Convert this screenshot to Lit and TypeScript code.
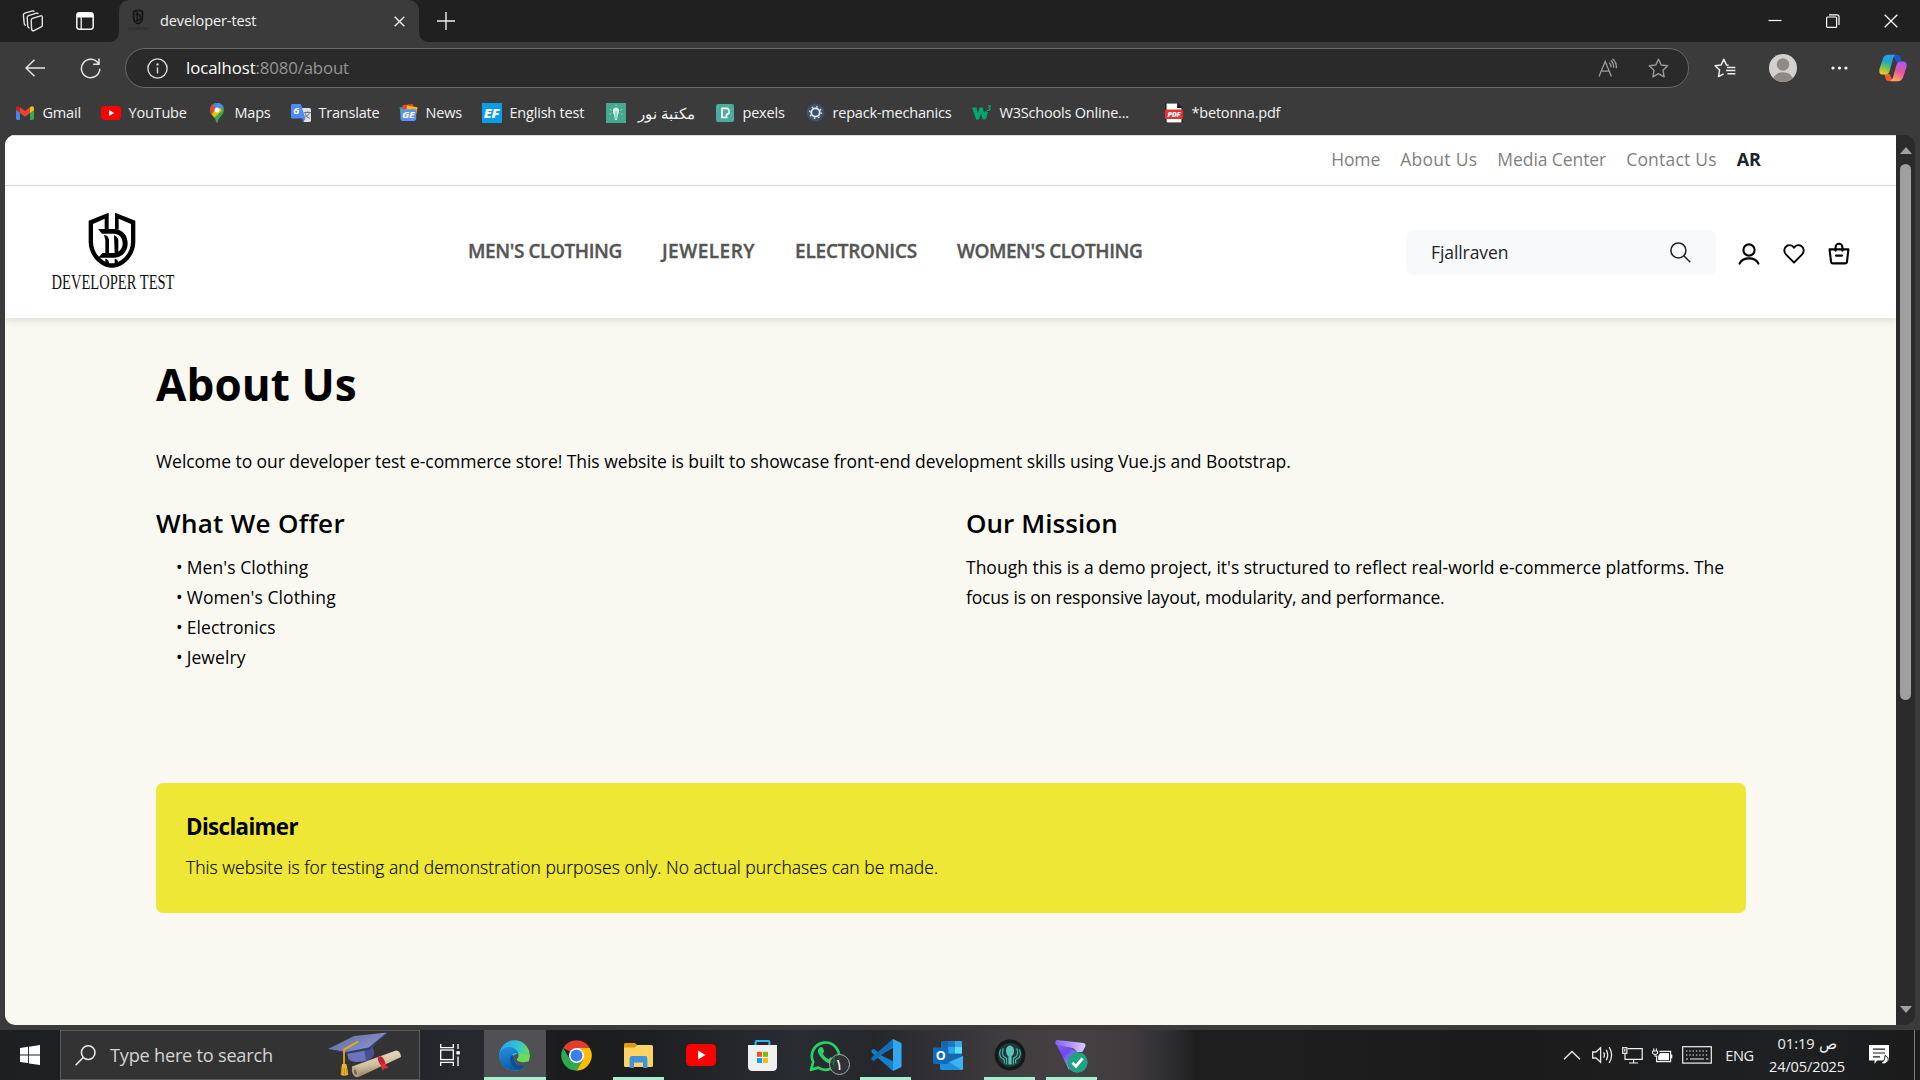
import { LitElement, html, css } from "lit";
import { customElement } from "lit/decorators.js";
import { classMap } from "lit/directives/class-map.js";

/* ---------- icons: browser chrome ---------- */
const workspacesIcon = html`<svg width="22" height="22" viewBox="0 0 22 22" fill="none" stroke="#e4e4e4" stroke-width="1.4" stroke-linejoin="round"><path d="M10.4 8.3 18.6 5.9Q20.3 5.5 20.3 7.2V15.2Q20.3 16.4 19.2 16.9L12 20.6Q9.9 21.4 9.6 19.2L9.2 10.2Q9.2 8.7 10.4 8.3Z"/><path d="M7.6 18Q5.9 18 5.7 16.2L5.2 7.4Q5.2 6 6.5 5.6L14.4 3.2Q15.8 2.9 16.2 4"/><path d="M3.9 15.4Q2.4 15.2 2.2 13.4L1.4 4.9Q1.4 3.5 2.7 3.1L10.6.9Q11.8.7 12.3 1.6"/></svg>`;
const tabsIcon = html`<svg width="18" height="18" viewBox="0 0 18 18"><rect x=".8" y=".8" width="16.4" height="16.4" rx="2.6" fill="none" stroke="#f4f4f4" stroke-width="1.5"/><path d="M1 5.6V3.4Q1 1 3.4 1H14.6Q17 1 17 3.4V5.6Z" fill="#fff"/><path d="M5.2 5V17" stroke="#f4f4f4" stroke-width="1.3"/></svg>`;
const closeIcon = html`<svg width="11" height="11" viewBox="0 0 11 11" stroke="#eee" stroke-width="1.4"><path d="M.7.7 10.3 10.3M10.3.7.7 10.3"/></svg>`;
const plusIcon = html`<svg width="18" height="18" viewBox="0 0 18 18" stroke="#eee" stroke-width="1.4"><path d="M9 0V18M0 9H18"/></svg>`;
const backIcon = html`<svg width="20" height="18" viewBox="0 0 20 18" fill="none" stroke="#e6e6e6" stroke-width="1.4"><path d="M9.5.7 1 9 9.5 17.3M1 9H20"/></svg>`;
const reloadIcon = html`<svg width="21" height="21" viewBox="0 0 21 21" fill="none" stroke="#e6e6e6" stroke-width="1.5"><path d="M18.4 5.6A9.2 9.2 0 1 0 19.8 10.8M19 .6V6.2H13.2"/></svg>`;
const infoIcon = html`<svg width="21" height="21" viewBox="0 0 21 21" fill="none" stroke="#dcdcdc" stroke-width="1.4"><circle cx="10.5" cy="10.5" r="9.6"/><path d="M10.5 9.3V15.4"/><circle cx="10.5" cy="6.4" r=".5" fill="#dcdcdc"/></svg>`;
const readAloudIcon = html`<svg width="20" height="20" viewBox="0 0 20 20" fill="none" stroke="#9b9b9b" stroke-width="1.3"><path d="M1 18.6 7.2 3.4 13.4 18.6M3.2 13.2H11.2M11.2 4.6Q13.2 6.6 13 9.4M12.8 2.6Q16 5.4 15.6 9.8M14.4.8Q18.8 4.4 18.4 10.2"/></svg>`;
const starIcon = html`<svg width="21" height="20" viewBox="0 0 21 20" fill="none" stroke="#9b9b9b" stroke-width="1.4" stroke-linejoin="round"><path d="M10.5 1.2 13.2 7 19.7 7.8 15 12.3 16.1 18.8 10.5 15.7 4.9 18.8 6 12.3 1.3 7.8 7.8 7Z"/></svg>`;
const collectionsIcon = html`<svg width="22" height="20" viewBox="0 0 22 20" fill="none" stroke="#ececec" stroke-width="1.5" stroke-linejoin="round"><path d="M14.6 7.2 12.4 6.9 9.8 1.2 7.2 6.9 1.1 7.7 5.6 12 4.5 18.6 9.6 15.8M13 9.4H21.4M12 12.6H21.4M13.4 15.8H21.4"/></svg>`;
const avatarIcon = html`<svg width="28" height="28" viewBox="0 0 28 28"><clipPath id="av"><circle cx="14" cy="14" r="14"/></clipPath><g clip-path="url(#av)"><rect width="28" height="28" fill="#d3d1cf"/><circle cx="14" cy="10.5" r="6.2" fill="#8f8a86"/><ellipse cx="14" cy="25.8" rx="10" ry="7.6" fill="#8f8a86"/></g></svg>`;
const dotsIcon = html`<svg width="17" height="4" viewBox="0 0 17 4" fill="#fff"><circle cx="2" cy="2" r="1.6"/><circle cx="8.5" cy="2" r="1.6"/><circle cx="15" cy="2" r="1.6"/></svg>`;
const copilotIcon = html`<svg width="28" height="28" viewBox="0 0 28 28"><defs>
<linearGradient id="cp1" x1=".6" y1="0" x2=".3" y2="1"><stop offset="0" stop-color="#2a9df0"/><stop offset=".35" stop-color="#19a7c9"/><stop offset=".65" stop-color="#6fc05a"/><stop offset="1" stop-color="#f6c915"/></linearGradient>
<linearGradient id="cp2" x1=".7" y1="0" x2=".3" y2="1"><stop offset="0" stop-color="#a55bf0"/><stop offset=".5" stop-color="#e8569c"/><stop offset="1" stop-color="#fbae5c"/></linearGradient></defs>
<path d="M14 1H18.5Q20.8 1 21.6 3.6L22.6 8H17.4Z" fill="#1c54d8"/><path d="M14 27H9.6Q7.3 27 6.5 24.4L5.4 20H10.6Z" fill="#ee5a32"/>
<path d="M9.6.8H17Q14.8 1.6 14 4.6L10.6 17Q9.6 20.6 6.6 20.6H4Q-.8 20.4.6 14.6L3.8 5Q5.2.8 9.6.8Z" fill="url(#cp1)"/>
<path d="M18.4 27.2H11Q13.2 26.4 14 23.4L17.4 11Q18.4 7.4 21.4 7.4H24Q28.8 7.6 27.4 13.4L24.2 23Q22.8 27.2 18.4 27.2Z" fill="url(#cp2)"/></svg>`;
const minIcon = html`<svg width="14" height="14" viewBox="0 0 14 14"><path d="M.5 6.5H13.5" stroke="#fff" stroke-width="1.2"/></svg>`;
const restoreIcon = html`<svg width="14" height="14" viewBox="0 0 14 14" fill="none" stroke="#fff" stroke-width="1.2"><rect x=".6" y="3" width="10" height="10.4" rx="1"/><path d="M3 .9H11Q13 .9 13 2.9V11"/></svg>`;
const exitIcon = html`<svg width="14" height="14" viewBox="0 0 14 14" stroke="#fff" stroke-width="1.3"><path d="M.7.7 13.3 13.3M13.3.7.7 13.3"/></svg>`;

/* ---------- icons: bookmarks ---------- */
const gmailIcon = html`<svg width="18" height="14" viewBox="0 0 18 14"><path d="M0 2V12.6Q0 14 1.4 14H4V5Z" fill="#4285f4"/><path d="M18 2V12.6Q18 14 16.6 14H14V5Z" fill="#34a853"/><path d="M14 1.2 15.2.4Q18-.6 18 2.4V4L14 7Z" fill="#fbbc04"/><path d="M4 1.2 2.8.4Q0-.6 0 2.4V4L4 7Z" fill="#c5221f"/><path d="M4 1.2 9 5 14 1.2V7L9 10.8 4 7Z" fill="#ea4335"/></svg>`;
const ytIcon = html`<svg width="20" height="14" viewBox="0 0 20 14"><rect width="20" height="14" rx="3.4" fill="#f00"/><path d="M8 4 13.2 7 8 10Z" fill="#fff"/></svg>`;
const mapsIcon = html`<svg width="14" height="20" viewBox="0 0 14 20"><clipPath id="mp"><path d="M7 0A6.8 6.8 0 0 1 14 7C14 12 8.6 13.6 7.8 19Q7 21 6.2 19C5.4 13.6 0 12 0 7A6.8 6.8 0 0 1 7 0Z"/></clipPath><g clip-path="url(#mp)"><rect width="14" height="20" fill="#34a853"/><path d="M0 0H14V3L7 9.4 0 3Z" fill="#4285f4"/><path d="M0 3 3.4 1.6 6 5 1 11-1 8Z" fill="#ea4335"/><path d="M1.4 11.6 9.4 2.4 11.8 7.8 4.4 14.6Z" fill="#fbbc04"/><path d="M8 0 14 0 14 5 10.8 4 7.6 7.4 5 5Z" fill="#4a8af4"/></g><circle cx="7" cy="7" r="2.5" fill="#fff"/></svg>`;
const translateIcon = html`<svg width="20" height="20" viewBox="0 0 20 20"><path d="M8 5H18.4Q20 5 20 6.6V17.6Q20 19 18.6 19H12.4Z" fill="#dfe1e5"/><text x="10.8" y="15.4" font-size="8.6" fill="#5f6368" font-family="Noto Sans CJK SC, sans-serif">文</text><path d="M1.4 1H9.8L14.4 15.6H1.4Q0 15.6 0 14.2V2.4Q0 1 1.4 1Z" fill="#4c8bf5"/><path d="M10.8 15.6H14.4L12.2 19Z" fill="#3367d6"/><text x="2.2" y="11" font-size="9" font-weight="700" fill="#fff" font-family="Open Sans, sans-serif">G</text></svg>`;
const newsIcon = html`<svg width="19" height="17" viewBox="0 0 19 17"><path d="M.4 3.4 11 .6 13 8 2 11Z" fill="#34a853"/><path d="M3.6 1 14 0 14.6 8H4Z" fill="#ea4335"/><path d="M8 1.4 18.6 3.2 17 11 7 9Z" fill="#fbbc04"/><path d="M1.4 5.2H17.2V14.6Q17.2 17 15 17H3.6Q1.4 17 1.4 14.6Z" fill="#5b93f5"/><text x="3" y="14.2" font-size="8.4" font-weight="700" fill="#fff" font-family="Open Sans, sans-serif" textLength="12.4" lengthAdjust="spacingAndGlyphs">GE</text></svg>`;
const efIcon = html`<svg width="20" height="20" viewBox="0 0 20 20"><rect width="20" height="20" fill="#0a9ced"/><text x="1.8" y="14.6" font-size="12.5" font-weight="800" font-style="italic" fill="#fff" font-family="Open Sans, sans-serif" textLength="15.6" lengthAdjust="spacingAndGlyphs">EF</text></svg>`;
const noorIcon = html`<svg width="20" height="20" viewBox="0 0 20 20"><rect width="20" height="20" fill="#44ab93"/><path d="M4 6 5.6 7.4M16 6 14.4 7.4M10 1.6V3.2M3.4 11H5M15 11H16.6" stroke="#c7d36b" stroke-width="1"/><path d="M10 4.4C13.4 4.4 14 8.6 12 11.4L10.9 17H9.1L8 11.4C6 8.6 6.6 4.4 10 4.4Z" fill="#d6f3ea"/><path d="M10 8V16" stroke="#44ab93" stroke-width=".8"/></svg>`;
const pexelsIcon = html`<svg width="18" height="18" viewBox="0 0 18 18"><rect width="18" height="18" rx="2" fill="#4bab9c"/><path d="M6 4.4H9.8A3 3 0 0 1 10.6 10.4V13.4H6Z" fill="none" stroke="#fff" stroke-width="1.6"/></svg>`;
const repackIcon = html`<svg width="19" height="19" viewBox="0 0 19 19"><circle cx="9.5" cy="9.5" r="9" fill="#40506f"/><circle cx="9.5" cy="9.5" r="4.2" fill="none" stroke="#e6e9ef" stroke-width="1.8"/><circle cx="9.5" cy="9.5" r="5.8" fill="none" stroke="#e6e9ef" stroke-width="1.4" stroke-dasharray="1.6 2.95"/></svg>`;
const w3Icon = html`<svg width="20" height="18" viewBox="0 0 20 18"><path d="M0 3.6H4.4L6 9.6 7.6 3.6H10.6L12.2 9.6 13 6.8 16 8.6 13.6 15.4H10.8L9 9.4 7 15.4H4.2Z" fill="#04aa6d"/><text x="14.8" y="7.4" font-size="8" font-weight="700" fill="#04aa6d" font-family="Open Sans, sans-serif">3</text></svg>`;
const pdfIcon = html`<svg width="18" height="20" viewBox="0 0 18 20"><path d="M1 0H12.4L17 4.8V20H1Z" fill="#fff" stroke="#111" stroke-width="1"/><path d="M12.2 0V5H17Z" fill="#111"/><rect y="6.6" width="18" height="9.4" rx="1" fill="#e5322d"/><text x="2.4" y="13.8" font-size="6.6" font-weight="800" fill="#fff" font-family="Open Sans, sans-serif" textLength="13.2" lengthAdjust="spacingAndGlyphs">PDF</text></svg>`;

/* ---------- icons: store page ---------- */
const brandLogo = html`<svg class="brand" width="124" height="82" viewBox="0 0 124 82"><g transform="translate(37 0) scale(.3333) translate(-24 -20)"><path d="M86 22 26 46V110C26 150 60 187 96 187S166 150 166 110V46L105 22V72H116V40L153 56V110C153 143 124 174 96 174S39 143 39 110V56L74 40V72H86Z"/><path d="M54 71H106C130 74 143 92 143 114S130 154 105 157H54L68 143H104C120 140 128 128 128 114S120 87 104 85H66Z"/><path d="M72 90H78Q86 94 87 104V143H76V104ZM102 90Q113 94 115 104V143H104ZM76 160Q86 162 87 172V180L76 178ZM104 160Q114 162 115 172V177L104 180Z"/></g><text x=".5" y="77" font-size="21.6" font-family="Liberation Serif, serif" fill="#111" textLength="123" lengthAdjust="spacingAndGlyphs">DEVELOPER TEST</text></svg>`;
const favicon = html`<svg width="22" height="26" viewBox="0 0 22 26"><path d="M10.4 2 6.6 3.6V9.6C6.6 12.8 8.6 15.6 11 15.6S15.4 12.8 15.4 9.6V3.6L11.6 2" fill="none" stroke="#151515" stroke-width="1.7"/><path d="M8.6 6.4H11.2Q13.4 6.8 13.4 9.4T11.2 12.4H8.6M10.3 3V14" fill="none" stroke="#151515" stroke-width="1.4"/><text x="1" y="22.4" font-size="5" font-family="Liberation Serif, serif" fill="#1b1b1b" textLength="20" lengthAdjust="spacingAndGlyphs">DEVELOPER TEST</text></svg>`;
const searchIcon = html`<svg width="21" height="21" viewBox="0 0 21 21" fill="none" stroke="#222" stroke-width="1.5"><circle cx="8.4" cy="8.4" r="7.5"/><path d="M13.8 13.8 20.3 20.3"/></svg>`;
const userIcon = html`<svg width="24" height="24" viewBox="0 0 24 24" fill="none" stroke="#000" stroke-width="2.1" stroke-linecap="round"><circle cx="12" cy="8" r="5.6"/><path d="M2.6 21.6C4.2 18 7.2 16.4 12 16.4S19.8 18 21.4 21.6"/></svg>`;
const heartIcon = html`<svg width="24" height="24" viewBox="0 0 24 24" fill="none" stroke="#000" stroke-width="1.9" stroke-linejoin="round"><path d="M12 20.6 3.9 12.4C1.4 9.6 2 5.6 4.9 3.9 7.4 2.5 10.4 3.2 12 5.8 13.6 3.2 16.6 2.5 19.1 3.9 22 5.6 22.6 9.6 20.1 12.4Z"/></svg>`;
const bagIcon = html`<svg width="24" height="24" viewBox="0 0 24 24" fill="none" stroke="#000" stroke-width="2.1" stroke-linecap="round" stroke-linejoin="round"><path d="M2.6 7.4H21.4L20 19.6Q19.8 21.4 18 21.4H6Q4.2 21.4 4 19.6ZM8.6 8.8V5.2A3.4 3.4 0 0 1 15.4 5.2V8.8M9 13.6H15"/></svg>`;

/* ---------- icons: taskbar ---------- */
const windowsIcon = html`<svg width="20" height="20" viewBox="0 0 20 20" fill="#fff"><path d="M0 2.9 8.1 1.8V9.5H0ZM9 1.7 20 0V9.5H9ZM0 10.4H8.1V18.1L0 17ZM9 10.4H20V20L9 18.4Z"/></svg>`;
const magnifierIcon = html`<svg width="21" height="21" viewBox="0 0 21 21" fill="none" stroke="#f0f0f0" stroke-width="1.5"><circle cx="13.2" cy="7.6" r="6.8"/><path d="M8.2 12.4.6 20.2"/></svg>`;
const gradIcon = html`<svg width="74" height="46" viewBox="0 0 74 46"><defs><linearGradient id="gc" x1="0" y1="0" x2="1" y2=".6"><stop offset="0" stop-color="#5b6699"/><stop offset="1" stop-color="#8b95c9"/></linearGradient><linearGradient id="gs" x1="0" y1="0" x2=".25" y2="1"><stop offset="0" stop-color="#f2ead6"/><stop offset=".6" stop-color="#cdbf9f"/><stop offset="1" stop-color="#8c7c5e"/></linearGradient></defs>
<path d="M18 16 44 12 46 22Q44 28 34 29.6 24 31 20.4 27Z" fill="#6c73bb"/><path d="M36 16 44 12 46 22Q44 27 38 28.8Z" fill="#4a4f93"/>
<path d="M0 17 26 4 59 .4 41 15.6 18 20Z" fill="url(#gc)"/><path d="M0 17 18 20 41 15.6 59 .4 59 2.4 41 18 18 22Z" fill="#353d6b"/>
<path d="M30 9.6 16 17.6V34" fill="none" stroke="#e5a91e" stroke-width="1.8"/><path d="M14 32H18.4L20.4 42.6Q16 45 12.6 42.6Z" fill="#efb32a"/><path d="M14 36 13.6 42M16.4 36V43M18.6 36 19 42" stroke="#a8740e" stroke-width=".6"/>
<path d="M24 34.6 68 18.4Q72.6 18.4 73 25L29.6 45.4Q24.4 44 24 34.6Z" fill="url(#gs)"/><ellipse cx="27.2" cy="40" rx="3" ry="5.2" transform="rotate(-22 27.2 40)" fill="#b5a684"/><ellipse cx="27.4" cy="40.2" rx="1.3" ry="2.8" transform="rotate(-22 27.4 40.2)" fill="#7a6a4c"/>
<path d="M49.6 25.4 53 24.2Q57 27 57.6 32.4L54 34Q50 31 49.6 25.4Z" fill="#c5202c"/><path d="M53 31Q58 32 60.6 36L56.4 36.6 55 38.6Q52 34 53 31Z" fill="#e0303a"/></svg>`;
const taskViewIcon = html`<svg width="20" height="22" viewBox="0 0 20 22" fill="none" stroke="#fff" stroke-width="1.3"><path d="M.7 0V3.6H13.3V0M.7 22V18.4H13.3V22"/><rect x=".7" y="6" width="12.6" height="9.6"/><path d="M18 0V5M18 12.6V22"/><path d="M16.4 8.8H19.8" stroke-width="3.2"/></svg>`;
const edgeIcon = html`<svg width="31" height="31" viewBox="0 0 31 31"><defs><linearGradient id="eg1" x1="0" y1=".3" x2="1" y2=".5"><stop offset="0" stop-color="#2aa8e8"/><stop offset=".55" stop-color="#2fc3d8"/><stop offset="1" stop-color="#6bdc4a"/></linearGradient><linearGradient id="eg2" x1=".2" y1="0" x2=".5" y2="1"><stop offset="0" stop-color="#1f8fe0"/><stop offset="1" stop-color="#0c59a4"/></linearGradient></defs>
<circle cx="15.5" cy="15.5" r="15.2" fill="url(#eg1)"/><path d="M.3 15C1 9.6 6 6.6 11 7.2 16.6 7.8 19.6 11.4 20 15 18.6 12.6 15 12.2 13 14.6 9.4 19.6 14.6 26.4 26.4 25.4 23.6 29 19.6 30.8 15.6 30.8 7 30.8-.2 23.6.3 15Z" fill="url(#eg2)"/><path d="M13 14.6C9 19 12 29.6 21.4 29.6 24 28.4 26 26.8 27.8 24.2 19.6 27.6 12.6 21.6 16 17.8Z" fill="#0b4f94"/><path d="M18.6 18.6C20.6 17.4 20.6 14.4 19.4 12.6L30.8 15.2C31 20 27 22 24 22 21 22 17.4 20.8 18.6 18.6Z" fill="#6adb5c"/><path d="M18 13.4C20.2 14.8 19.6 17.6 18.2 18.6 16.8 20 19.6 22.8 25 22.2 29.4 21.8 31 21.6 31 21.6L28.6 25.6C19.6 28 12.4 21.4 14.6 15.6Z" fill="#515154"/></svg>`;
const chromeIcon = html`<svg width="31" height="31" viewBox="0 0 31 31"><path d="M15.5 15.5 2.3 7.9A15.2 15.2 0 0 1 28.7 7.9H15.5Z" fill="#e33b2e"/><path d="M2.3 7.9A15.2 15.2 0 0 0 15.5 30.7L22.1 19.3 9 19.3Z" fill="#2da94f"/><path d="M28.7 7.9A15.2 15.2 0 0 1 15.5 30.7L22.1 19.3 15.5 7.9Z" fill="#fdbd00"/><circle cx="15.5" cy="15.5" r="7.6" fill="#fff"/><circle cx="15.5" cy="15.5" r="6" fill="#3a7ff0"/></svg>`;
const explorerIcon = html`<svg width="29" height="25" viewBox="0 0 29 25"><path d="M0 1.4Q0 0 1.4 0H11L13.6 2.4 11 5H0Z" fill="#dc9b10"/><path d="M0 4.4H10.8L13.4 2H27.4Q29 2 29 3.6V22.4Q29 24 27.4 24H1.6Q0 24 0 22.4Z" fill="#fdd365"/><path d="M5.6 25V15.4Q5.6 13 8 13H21Q23.4 13 23.4 15.4V25H19V19.4H10V25Z" fill="#3f93dd"/></svg>`;
const youtubeTile = html`<svg width="30" height="22" viewBox="0 0 30 22"><rect width="30" height="22" rx="4.6" fill="#f00"/><path d="M12 6.6 19.6 11 12 15.4Z" fill="#fff"/></svg>`;
const storeIcon = html`<svg width="29" height="31" viewBox="0 0 29 31"><path d="M7.6 6V1.9Q7.6 1 8.6 1H20.4Q21.4 1 21.4 1.9V6" fill="none" stroke="#31b3ef" stroke-width="2"/><path d="M0 5H29V26.6Q29 31 24.6 31H4.4Q0 31 0 26.6Z" fill="#f0f0f1"/><path d="M9 11.8H14V16.8H9Z" fill="#f25022"/><path d="M15 11.8H20V16.8H15Z" fill="#7fba00"/><path d="M9 18H14V23H9Z" fill="#00a4ef"/><path d="M15 18H20V23H15Z" fill="#ffb900"/></svg>`;
const whatsappIcon = html`<svg width="42" height="36" viewBox="0 0 42 36"><path d="M2 30.8 4.2 23A13.6 13.6 0 1 1 9.2 28.6Z" fill="none" stroke="#25d366" stroke-width="2.7" stroke-linejoin="round"/><path d="M11.4 8.2Q13 7.4 13.8 8.8L15.2 12Q15.2 13 13.6 14.6 15.6 18.6 19.6 20.2 21.4 18 22.4 18.4L25.6 20Q26.2 22.6 23.4 24 19.6 25.6 14 20.4 8 14.4 9 11Q9.8 9 11.4 8.2Z" fill="#25d366"/><circle cx="30.5" cy="25.5" r="10" fill="#323337" fill-opacity=".93" stroke="#aaa" stroke-width="1"/><path d="M25 17.6A15 15 0 0 1 24 26" stroke="#1c7b45" stroke-width="1.6" fill="none"/><text x="30" y="31.2" font-size="16" text-anchor="middle" fill="#fff" font-family="DejaVu Sans, sans-serif">١</text></svg>`;
const vscodeIcon = html`<svg width="31" height="32" viewBox="0 0 31 32"><path d="M22 0 7.4 13.4 2.8 10 .6 11V13.4L22 32 24 28 22.6 22.6 9.4 16 22.6 8.6Z" fill="#1481cd"/><path d="M.6 18.6V21L2.8 22 24 5.4 22 0Z" fill="#0f70b7"/><path d="M22 0 29.4 3.4Q30.6 4 30.6 5.2V26.8Q30.6 28 29.4 28.6L22 32Z" fill="#32a6f0"/></svg>`;
const outlookIcon = html`<svg width="30" height="29" viewBox="0 0 30 29"><rect x="8" width="21" height="20" rx="1.4" fill="#1667b0"/><path d="M15 0H22V6H15Z" fill="#1f78c4"/><path d="M15 6H22V12.6H15Z" fill="#28a8ea"/><path d="M22 0H27.8Q29 0 29 1.2V6H22Z" fill="#37a9ea"/><path d="M22 6H29V12.6H22Z" fill="#5fdcff"/><path d="M7 15 18.6 22 30 15V27.6Q30 29 28.6 29H8.4Q7 29 7 27.6Z" fill="#1a90e0"/><path d="M30 15V27.6Q30 29 28.6 29L16 21Z" fill="#3cb4f4"/><rect y="6.4" width="15.4" height="16.6" rx="1.4" fill="#0f6cbd"/><text x="7.7" y="19.3" font-size="12.6" font-weight="700" text-anchor="middle" fill="#fff" font-family="Open Sans, sans-serif">O</text></svg>`;
const krakenIcon = html`<svg width="32" height="32" viewBox="0 0 32 32"><circle cx="16" cy="16" r="15.4" fill="#14191c"/><circle cx="16" cy="16" r="12" fill="#1f3b3d"/><path d="M16 6.6Q20.6 7.6 20 13 19.6 16 17.6 17V25.4H14.4V17Q12.4 16 12 13 11.4 7.6 16 6.6Z" fill="#5cc4b4"/><path d="M12.6 25.4V19.4L9.4 17.2Q7.4 13.2 9.4 9.4M10.4 24.4V20.8L6.8 18.4Q4.6 14.6 6.6 10.6M19.4 25.4V19.4L22.6 17.2Q24.6 13.2 22.6 9.4M21.6 24.4V20.8L25.2 18.4Q27.4 14.6 25.4 10.6" fill="none" stroke="#4fae9f" stroke-width="1.2"/></svg>`;
const protonIcon = html`<svg width="33" height="34" viewBox="0 0 33 34"><defs><linearGradient id="pv" x1="0" y1="0" x2=".7" y2="1"><stop offset="0" stop-color="#8f5cf7"/><stop offset=".5" stop-color="#6d49f2"/><stop offset="1" stop-color="#b9a2ff"/></linearGradient><linearGradient id="pw" x1="0" y1="0" x2="1" y2="0"><stop offset="0" stop-color="#8761f5"/><stop offset="1" stop-color="#d9ccff"/></linearGradient></defs><path d="M.4 3.2 14 31 21 12 12 7Z" fill="url(#pv)"/><path d="M2.4 1 28.4 4Q31.6 4.8 30 8L27.4 13H21.6Q20 9.4 15 8.6L.8 5.6Q-.4.8 2.4 1Z" fill="url(#pw)"/><circle cx="22.4" cy="23.4" r="10.3" fill="#22a284"/><path d="M17.4 23.8 21 27.2 27.6 19.4" fill="none" stroke="#fff" stroke-width="2.8"/></svg>`;

const chevronIcon = html`<svg width="18" height="10" viewBox="0 0 18 10" fill="none" stroke="#e8e8e8" stroke-width="1.4"><path d="M1 9.2 9 1.4 17 9.2"/></svg>`;
const speakerIcon = html`<svg width="21" height="18" viewBox="0 0 21 18" fill="none" stroke="#e8e8e8" stroke-width="1.3"><path d="M.7 6H4L8.6 1.8V16.2L4 12H.7ZM11.6 6.4Q13.2 9 11.6 11.6M14.2 3.8Q17.2 9 14.2 14.2M17.2 1Q22 9 17.2 17"/></svg>`;
const networkIcon = html`<svg width="21" height="17" viewBox="0 0 21 17" fill="none" stroke="#f2f2f2" stroke-width="1.2"><path d="M5.6 1.6H20.2V12.4H3V6.6M11.6 12.4V15.8M7 16H16"/><rect x=".7" y=".7" width="4.2" height="5.6"/><path d="M2.8 2V4.6"/></svg>`;
const batteryIcon = html`<svg width="21" height="15" viewBox="0 0 21 15"><path d="M7.4 3.4H18.6V13.6H4.6V7.6" fill="none" stroke="#f2f2f2" stroke-width="1.2"/><path d="M8 5H17V12.2H6.2V8Z" fill="#fff"/><path d="M19.6 6.6V10.4" stroke="#fff" stroke-width="1.4"/><path d="M.6 3H5.6V5Q5.6 6.4 3.1 6.4T.6 5ZM1.8.4V3M4.4.4V3M3.1 6.4V9" stroke="#fff" stroke-width="1" fill="none"/></svg>`;
const keyboardIcon = html`<svg width="30" height="18" viewBox="0 0 30 18" fill="none" stroke="#f2f2f2" stroke-width="1.2"><rect x=".7" y=".7" width="28.6" height="16.4"/><path d="M4 5H27M4 9H27" stroke-dasharray="1.4 1.9"/><path d="M4 13H6M8 13H22M24 13H26.4"/></svg>`;
const noticeIcon = html`<svg width="20" height="21" viewBox="0 0 20 21"><path d="M0 0H20V15.6H8L5.6 19V15.6H0Z" fill="#fff"/><path d="M4 4.2H16M4 8H16M4 11.8H11" stroke="#1c1c1c" stroke-width="1.2"/><path d="M16 10.4Q20.4 12.4 18.8 16.6 16 20.6 11.6 18 16.2 16.4 16 10.4Z" fill="#fff" stroke="#1c1c1c" stroke-width="1"/></svg>`;

interface Bookmark { label: string; icon: unknown; size: string; rtl?: boolean }
const bookmarks: Bookmark[] = [
  { label: "Gmail", icon: gmailIcon, size: "w86" },
  { label: "YouTube", icon: ytIcon, size: "w106" },
  { label: "Maps", icon: mapsIcon, size: "w84" },
  { label: "Translate", icon: translateIcon, size: "w107" },
  { label: "News", icon: newsIcon, size: "w84" },
  { label: "English test", icon: efIcon, size: "w124" },
  { label: "مكتبة نور", icon: noorIcon, size: "w109", rtl: true },
  { label: "pexels", icon: pexelsIcon, size: "w90" },
  { label: "repack-mechanics", icon: repackIcon, size: "w167" },
  { label: "W3Schools Online...", icon: w3Icon, size: "w192" },
  { label: "*betonna.pdf", icon: pdfIcon, size: "w124" },
];

@customElement("browser-chrome")
class BrowserChrome extends LitElement {
  static styles = css`
    :host { display: block; color: #f3f3f3; font-family: "Open Sans", "Noto Sans", sans-serif; }
    svg { display: block; flex: none; }
    .title { height: 42px; background: #202020; display: flex; align-items: center; }
    .lead { width: 119px; display: flex; align-items: center; gap: 32px; padding-left: 22px; box-sizing: border-box; }
    .tab { position: relative; width: 300px; height: 42px; box-sizing: border-box; padding: 0 14px 0 8px; background: #3b3b3b; border-radius: 10px 10px 0 0; display: flex; align-items: center; }
    .tab::before, .tab::after { content: ""; position: absolute; bottom: 0; width: 9px; height: 9px; }
    .tab::before { left: -9px; background: radial-gradient(circle at 0 0, #202020 8.5px, #3b3b3b 9px); }
    .tab::after { right: -9px; background: radial-gradient(circle at 100% 0, #202020 8.5px, #3b3b3b 9px); }
    .name { flex: 1; padding-left: 11px; font-size: 14.5px; line-height: 20px; letter-spacing: -0.1px; }
    .plus { margin-left: 18px; }
    .win { margin-left: auto; display: flex; gap: 44px; padding-right: 22px; }
    .bar { height: 52px; display: flex; align-items: center; padding-left: 25px; }
    .reload { margin-left: 35px; }
    .url { width: 1564px; height: 40px; box-sizing: border-box; margin-left: 24px; border: 1px solid #686868; border-radius: 20px; background: #2a2a2a; display: flex; align-items: center; padding: 0 19px 0 21px; }
    .addr { flex: 1; margin-left: 18px; padding-bottom: 1px; font-size: 16.8px; letter-spacing: -0.08px; line-height: 24px; color: #fff; }
    .addr span { color: #969696; letter-spacing: -0.14px; }
    .star { margin-left: 30px; }
    .coll { margin-left: 25px; }
    .ava { margin-left: 33px; }
    .dots { margin-left: 34px; }
    .cop { margin-left: 31px; }
    .marks { height: 41px; padding: 0 0 4px 15px; box-sizing: border-box; display: flex; align-items: center; }
    .mark { display: flex; align-items: center; gap: 7.5px; font-size: 14.5px; letter-spacing: -0.2px; line-height: 20px; white-space: nowrap; }
    .mark i { width: 20px; display: flex; justify-content: center; }
    .mark.rtl { gap: 12px; letter-spacing: 0; font-size: 15px; }
    .w84 { width: 84px; } .w86 { width: 86px; } .w90 { width: 90px; } .w106 { width: 106px; } .w107 { width: 107px; }
    .w109 { width: 109px; } .w124 { width: 124px; } .w167 { width: 167px; } .w192 { width: 192px; }
  `;
  render() {
    return html`
      <div class="title">
        <div class="lead">${workspacesIcon}${tabsIcon}</div>
        <div class="tab">${favicon}<div class="name">developer-test</div>${closeIcon}</div>
        <div class="plus">${plusIcon}</div>
        <div class="win">${minIcon}${restoreIcon}${exitIcon}</div>
      </div>
      <div class="bar">
        ${backIcon}
        <div class="reload">${reloadIcon}</div>
        <div class="url">
          ${infoIcon}
          <div class="addr">localhost<span>:8080/about</span></div>
          ${readAloudIcon}<div class="star">${starIcon}</div>
        </div>
        <div class="coll">${collectionsIcon}</div>
        <div class="ava">${avatarIcon}</div>
        <div class="dots">${dotsIcon}</div>
        <div class="cop">${copilotIcon}</div>
      </div>
      <div class="marks">
        ${bookmarks.map((b) => html`<div class=${classMap({ mark: true, [b.size]: true, rtl: !!b.rtl })}><i>${b.icon}</i><span>${b.label}</span></div>`)}
      </div>`;
  }
}

@customElement("store-page")
class StorePage extends LitElement {
  static styles = css`
    :host { display: block; background: #f9f9f2; color: #000; font-family: "Open Sans", "Noto Sans", sans-serif; font-size: 17.5px; line-height: 30px; }
    svg { display: block; flex: none; }
    h1, h2, h3, p, ul { margin: 0; padding: 0; }
    .top { height: 51px; box-sizing: border-box; padding: 0 135px 3px 0; border-top: 1px solid #dcdcdc; border-bottom: 1px solid #dcdcdc; background: #fff; display: flex; justify-content: flex-end; align-items: center; gap: 20px; color: #7f7f7f; white-space: nowrap; }
    .home { letter-spacing: -0.1px; }
    .about { letter-spacing: 0.28px; }
    .contact { letter-spacing: 0.2px; }
    .media { letter-spacing: -0.08px; }
    .lang { color: #212529; font-weight: 700; font-size: 18px; }
    .head { position: relative; height: 132px; box-sizing: border-box; padding: 0 45.5px 0 46px; background: #fff; box-shadow: 0 3px 8px rgba(0, 0, 0, 0.11); display: flex; align-items: center; }
    .brand { margin-bottom: -1px; }
    nav { display: flex; gap: 40px; margin-left: 293px; padding-bottom: 2px; font-size: 19px; font-weight: 600; color: #555; -webkit-text-stroke: 0.35px #555; white-space: nowrap; }
    .n1 { letter-spacing: -0.42px; } .n2 { letter-spacing: 0.5px; } .n3 { letter-spacing: -0.25px; } .n4 { letter-spacing: -0.46px; }
    .search { width: 310px; height: 45px; box-sizing: border-box; margin: 1px 0 0 auto; padding: 0 25px; border-radius: 7px; background: #f8f9fb; color: #212529; display: flex; align-items: center; justify-content: space-between; }
    .search svg { margin-bottom: 1px; }
    .search span { padding-bottom: 2px; letter-spacing: -0.08px; }
    .tools { display: flex; gap: 21px; margin-left: 20.5px; padding-top: 3px; }
    main { padding: 36px 150px 0 151px; }
    h1 { font-size: 44px; line-height: 60px; font-weight: 700; letter-spacing: 0.1px; }
    .intro { margin-top: 32px; letter-spacing: -0.055px; white-space: nowrap; }
    .cols { display: grid; grid-template-columns: 780px 780px; column-gap: 30px; margin-top: 32px; height: 275px; }
    h2 { font-size: 26px; line-height: 30px; font-weight: 600; margin-bottom: 14px; }
    .offer { letter-spacing: 0.3px; }
    .mission { letter-spacing: 0.07px; }
    ul { list-style: none; padding-left: 20px; }
    li { letter-spacing: 0.08px; display: flex; gap: 4px; }
    .l1 { letter-spacing: 0; }
    .l2 { display: block; letter-spacing: -0.17px; }
    .note { height: 130px; box-sizing: border-box; padding: 30px; border-radius: 7px; background: #eee735; }
    h3 { font-size: 22.3px; line-height: 27px; font-weight: 700; letter-spacing: -0.62px; margin-bottom: 12px; }
    .light { font-weight: 300; letter-spacing: 0.04px; -webkit-text-stroke: 0.15px #000; }
  `;
  render() {
    return html`
      <div class="top">
        <span class="home">Home</span><span class="about">About Us</span><span class="media">Media Center</span><span class="contact">Contact Us</span><span class="lang">AR</span>
      </div>
      <div class="head">
        ${brandLogo}
        <nav><span class="n1">MEN'S CLOTHING</span><span class="n2">JEWELERY</span><span class="n3">ELECTRONICS</span><span class="n4">WOMEN'S CLOTHING</span></nav>
        <div class="search"><span>Fjallraven</span>${searchIcon}</div>
        <div class="tools">${userIcon}${heartIcon}${bagIcon}</div>
      </div>
      <main>
        <h1>About Us</h1>
        <p class="intro">Welcome to our developer test e-commerce store! This website is built to showcase front-end development skills using Vue.js and Bootstrap.</p>
        <div class="cols">
          <section>
            <h2 class="offer">What We Offer</h2>
            <ul>${["Men's Clothing", "Women's Clothing", "Electronics", "Jewelry"].map((t) => html`<li><span>•</span><span>${t}</span></li>`)}</ul>
          </section>
          <section>
            <h2 class="mission">Our Mission</h2>
            <p><span class="l1">Though this is a demo project, it's structured to reflect real-world e-commerce platforms. The</span> <span class="l2">focus is on responsive layout, modularity, and performance.</span></p>
          </section>
        </div>
        <div class="note">
          <h3>Disclaimer</h3>
          <p class="light">This website is for testing and demonstration purposes only. No actual purchases can be made.</p>
        </div>
      </main>`;
  }
}

@customElement("task-bar")
class TaskBar extends LitElement {
  static styles = css`
    :host { display: flex; height: 50px; color: #f0f0f0; font-family: "Open Sans", "Noto Sans", sans-serif;
      background: linear-gradient(90deg, #1e1f20 0, #1f2021 60px, #24262b 430px, #27292e 480px, #1c1c1e 560px, #1d1e20 640px, #25272b 740px, #292c31 800px, #25272b 870px, #333135 940px, #413e40 1010px, #454143 1080px, #413d3f 1130px, #2c2c2f 1172px, #1f1f20 1195px, #1c1b1b 1500px, #1e2022 1780px, #1b1b1b 1920px); }
    svg { display: block; flex: none; }
    .cell { display: flex; align-items: center; justify-content: center; }
    .start { width: 60px; }
    .find { width: 360px; box-sizing: border-box; border: 1px solid #5c5c5c; background: #333; display: flex; align-items: center; padding: 0 17px 0 14px; }
    .find span { flex: 1; margin-left: 14px; font-size: 18.2px; letter-spacing: -0.24px; color: #d4d4d4; line-height: 26px; }
    .view { width: 64px; box-sizing: border-box; padding-right: 4px; }
    .app { width: 61.9px; position: relative; }
    .app.active { background: #515154; }
    .app.run::after { content: ""; position: absolute; bottom: 0; left: 5px; right: 6px; height: 3px; background: #a4f0cd; }
    .app.active::after { left: 0; right: 0; }
    .app.wide { box-sizing: border-box; padding: 3px 0 0 11px; }
    .app.drop { box-sizing: border-box; padding-top: 2px; }
    .tray { margin-left: auto; display: grid; grid-template-columns: 30px 30px 30px 30px 40px 45px 90px 62px 6px; font-size: 14.6px; }
    .lang { letter-spacing: -0.35px; }
    .clock { display: flex; flex-direction: column; align-items: center; line-height: 23px; letter-spacing: -0.14px; padding-top: 2px; white-space: nowrap; }
    .notice { display: flex; align-items: center; padding: 0 0 0 17px; }
    .peek { border-left: 1px solid #7b7b7b; }
  `;
  render() {
    const apps: [unknown, string][] = [
      [edgeIcon, "run active"], [chromeIcon, ""], [explorerIcon, "run"], [youtubeTile, ""], [storeIcon, ""],
      [whatsappIcon, "wide"], [vscodeIcon, "run"], [outlookIcon, ""], [krakenIcon, "run"], [protonIcon, "run drop"],
    ];
    return html`
      <div class="cell start">${windowsIcon}</div>
      <div class="find">${magnifierIcon}<span>Type here to search</span>${gradIcon}</div>
      <div class="cell view">${taskViewIcon}</div>
      ${apps.map(([icon, cls]) => html`<div class=${`cell app ${cls}`}>${icon}</div>`)}
      <div class="tray">
        <div class="cell">${chevronIcon}</div><div class="cell">${speakerIcon}</div><div class="cell">${networkIcon}</div>
        <div class="cell">${batteryIcon}</div><div class="cell">${keyboardIcon}</div>
        <div class="cell lang">ENG</div>
        <div class="clock"><span>01:19 ص</span><span>24/05/2025</span></div>
        <div class="notice">${noticeIcon}</div><div class="peek"></div>
      </div>`;
  }
}

@customElement("app-root")
class AppRoot extends LitElement {
  static styles = css`
    :host { display: block; width: 1920px; height: 1080px; overflow: hidden; }
    .screen { height: 1080px; display: flex; flex-direction: column; background: #3b3b3b; }
    .view { height: 890px; margin: 0 5px 5px; display: flex; }
    store-page { flex: 1; border-radius: 10px 0 0 10px; overflow: hidden; }
    .scroll { width: 19px; box-sizing: border-box; background: #2b2b2b; border-radius: 0 10px 10px 0; padding: 12px 4px; display: flex; flex-direction: column; align-items: center; justify-content: space-between; }
    .up, .down { width: 0; height: 0; border: 6.5px solid transparent; }
    .up { border-top: 0; border-bottom: 7px solid #a0a0a0; }
    .down { border-bottom: 0; border-top: 7px solid #a0a0a0; }
    .thumb { width: 11px; height: 536px; margin: 10px 0 auto; border-radius: 6px; background: #9f9f9f; }
  `;
  render() {
    return html`<div class="screen">
      <browser-chrome></browser-chrome>
      <div class="view"><store-page></store-page><div class="scroll"><div class="up"></div><div class="thumb"></div><div class="down"></div></div></div>
      <task-bar></task-bar>
    </div>`;
  }
}
